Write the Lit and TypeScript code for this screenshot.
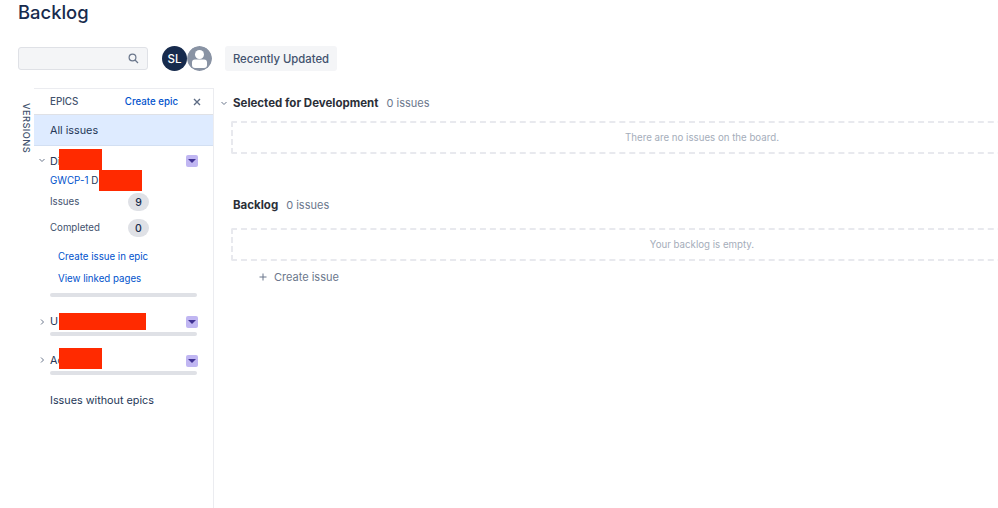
import { LitElement, html, css } from "lit";
import { customElement } from "lit/decorators.js";

const caret = html`<span class="lozenge"><svg width="8" height="4" viewBox="0 0 8 4"><path d="M0 0h8L4 4z" fill="#403294"/></svg></span>`;
const chevDown = html`<svg class="chev" width="8" height="8" viewBox="0 0 8 8"><path d="M1.5 3l2.5 2.5L6.5 3" fill="none" stroke="#6b778c" stroke-width="1"/></svg>`;
const chevRight = html`<svg class="chev" width="8" height="8" viewBox="0 0 8 8"><path d="M3 1.5L5.5 4 3 6.5" fill="none" stroke="#6b778c" stroke-width="1"/></svg>`;

@customElement("app-root")
export class AppRoot extends LitElement {
  static styles = css`
    :host { display: block; width: 998px; height: 508px; overflow: hidden; background: #fff; color: #172b4d; font-family: Inter, "Liberation Sans", sans-serif; font-size: 11px; }
    * { box-sizing: border-box; }
    h1 { margin: 0; padding: 0 0 0 18px; height: 46px; font-size: 18.4px; line-height: 24px; font-weight: 500; }
    .toolbar { display: flex; align-items: center; height: 25px; padding-left: 18px; }
    .search { width: 130px; height: 23px; background: #f4f5f7; border: 1px solid #dfe1e6; border-radius: 3px; display: flex; align-items: center; justify-content: flex-end; padding-right: 8px; }
    .avatars { display: flex; margin-left: 14px; }
    .avatar { width: 25px; height: 25px; border-radius: 50%; }
    .sl { background: #172b4d; color: #fff; display: flex; align-items: center; justify-content: center; font-size: 11.5px; font-weight: 500; }
    .filter { margin-left: 13px; width: 112px; height: 25px; background: #f4f5f7; border-radius: 3px; display: flex; align-items: center; justify-content: center; font-size: 11.3px; font-weight: 500; color: #42526e; }
    .main { display: flex; margin-top: 17px; height: 420px; }
    .versions { width: 34px; flex: none; position: relative; }
    .versions span { position: absolute; left: 21px; top: 15px; writing-mode: vertical-rl; font-size: 9.3px; font-weight: 500; color: #42526e; letter-spacing: 0.4px; line-height: 10px; }
    .epics { width: 180px; flex: none; border-top: 1px solid #ebecf0; border-right: 1px solid #ebecf0; }
    .epics-head { height: 26px; display: flex; align-items: center; padding-left: 16px; border-bottom: 1px solid #dfe1e6; }
    .epics-title { font-size: 9.8px; font-weight: 500; color: #42526e; flex: 1; }
    .create-epic { font-size: 9.7px; color: #0052cc; font-weight: 500; }
    .close { margin: 0 12px 0 15px; display: flex; }
    .all { height: 31px; background: #deebff; border-bottom: 1px solid #d2dff2; padding-left: 16px; display: flex; align-items: center; font-size: 10.8px; color: #253858; }
    .epic { position: relative; padding-left: 16px; }
    .epic-row { display: flex; align-items: center; position: relative; font-size: 10.8px; color: #253858; }
    .first { margin-top: 4px; }
    .first .epic-row { height: 22px; }
    .second { margin-top: 15px; }
    .second .epic-row { height: 18px; }
    .third { margin-top: 14px; }
    .third .epic-row { height: 20px; }
    .chev { position: absolute; left: -12px; top: 6px; }
    .lozenge { position: absolute; left: 136px; top: 5px; width: 12px; height: 12px; border-radius: 2px; background: #c0b6f2; display: flex; align-items: center; justify-content: center; }
    .second .lozenge { top: 4px; }
    .redact { position: absolute; background: #ff2a00; }
    .r1 { left: 9px; top: -1px; width: 43px; height: 21px; }
    .r2 { left: 49px; top: -2px; width: 43px; height: 21px; }
    .r3 { left: 9px; top: 1px; width: 87px; height: 17px; }
    .r4 { left: 9px; top: -2px; width: 43px; height: 21px; }
    .key { position: relative; height: 16px; line-height: 17px; font-size: 9.8px; color: #0052cc; margin-bottom: 1px; }
    .key span { color: #253858; }
    .stat { display: flex; justify-content: space-between; align-items: center; height: 26px; width: 99px; font-size: 9.7px; color: #42526e; }
    .label { margin-top: -2px; }
    .badge { width: 21px; height: 18px; border-radius: 9px; background: #dfe1e6; color: #172b4d; font-size: 10.5px; font-weight: 500; display: flex; align-items: center; justify-content: center; }
    .links { display: flex; flex-direction: column; gap: 9px; padding: 9px 0 0 8px; font-size: 9.7px; line-height: 13px; color: #0052cc; }
    .bar { height: 4px; width: 147px; background: #dfe1e6; border-radius: 2px; }
    .first .bar { margin-top: 8px; }
    .second .bar { margin-top: 2px; }
    .third .bar { margin-top: 1px; }
    .no-epics { padding: 19px 0 0 16px; font-size: 10.8px; color: #253858; }
    .content { flex: 1; min-width: 0; padding: 4px 0 0 6px; position: relative; }
    .section-head { display: flex; align-items: center; height: 22px; padding-left: 13px; position: relative; font-size: 11.5px; font-weight: 700; color: #2b2f38; }
    .section-head .chev { left: 0; top: 7px; }
    .count { margin-left: 8px; font-weight: 400; font-size: 11px; color: #6b778c; }
    .empty { margin: 7px -175px 0 11px; height: 33px; border: 2px dashed #e8e9ee; border-radius: 2px; display: flex; align-items: center; justify-content: center; font-size: 9.7px; color: #a5adba; }
    .gap { height: 40px; }
    .backlog .empty { margin-top: 12px; }
    .create { display: flex; align-items: center; gap: 7px; margin: 8px 0 0 39px; height: 16px; font-size: 11px; color: #6b778c; }
  `;

  render() {
    return html`
      <h1>Backlog</h1>
      <div class="toolbar">
        <div class="search">
          <svg width="11" height="11" viewBox="0 0 11 11"><circle cx="4.5" cy="4.5" r="3.4" fill="none" stroke="#6b778c" stroke-width="1.2"/><path d="M7 7l3 3" stroke="#6b778c" stroke-width="1.3"/></svg>
        </div>
        <div class="avatars">
          <div class="avatar sl">SL</div>
          <svg class="avatar" viewBox="0 0 25 25">
            <circle cx="12.5" cy="12.5" r="12.5" fill="#8993a4"/>
            <circle cx="12.5" cy="8.5" r="4.5" fill="#fff"/>
            <rect x="5" y="13.5" width="15" height="8.5" rx="3" fill="#fff"/>
          </svg>
        </div>
        <div class="filter">Recently Updated</div>
      </div>
      <div class="main">
        <div class="versions"><span>VERSIONS</span></div>
        <div class="epics">
          <div class="epics-head">
            <span class="epics-title">EPICS</span>
            <span class="create-epic">Create epic</span>
            <span class="close"><svg width="8" height="8" viewBox="0 0 8 8"><path d="M1 1l6 6M7 1l-6 6" stroke="#5e6c84" stroke-width="1.4"/></svg></span>
          </div>
          <div class="all">All issues</div>
          <div class="epic first">
            <div class="epic-row">${chevDown}Di${caret}<i class="redact r1"></i></div>
            <div class="key">GWCP-1 <span>D</span><i class="redact r2"></i></div>
            <div class="stat"><span class="label">Issues</span><span class="badge">9</span></div>
            <div class="stat"><span class="label">Completed</span><span class="badge">0</span></div>
            <div class="links"><span>Create issue in epic</span><span>View linked pages</span></div>
            <div class="bar"></div>
          </div>
          <div class="epic second">
            <div class="epic-row">${chevRight}U<i class="redact r3"></i>${caret}</div>
            <div class="bar"></div>
          </div>
          <div class="epic third">
            <div class="epic-row">${chevRight}Ac<i class="redact r4"></i>${caret}</div>
            <div class="bar"></div>
          </div>
          <div class="no-epics">Issues without epics</div>
        </div>
        <div class="content">
          <div class="section-head">${chevDown}Selected for Development<span class="count">0 issues</span></div>
          <div class="empty">There are no issues on the board.</div>
          <div class="gap"></div>
          <div class="backlog">
            <div class="section-head">Backlog<span class="count">0 issues</span></div>
            <div class="empty">Your backlog is empty.</div>
          </div>
          <div class="create"><svg width="8" height="8" viewBox="0 0 8 8"><path d="M4 .5v7M.5 4h7" stroke="#6b778c" stroke-width="1"/></svg>Create issue</div>
        </div>
      </div>
    `;
  }
}
